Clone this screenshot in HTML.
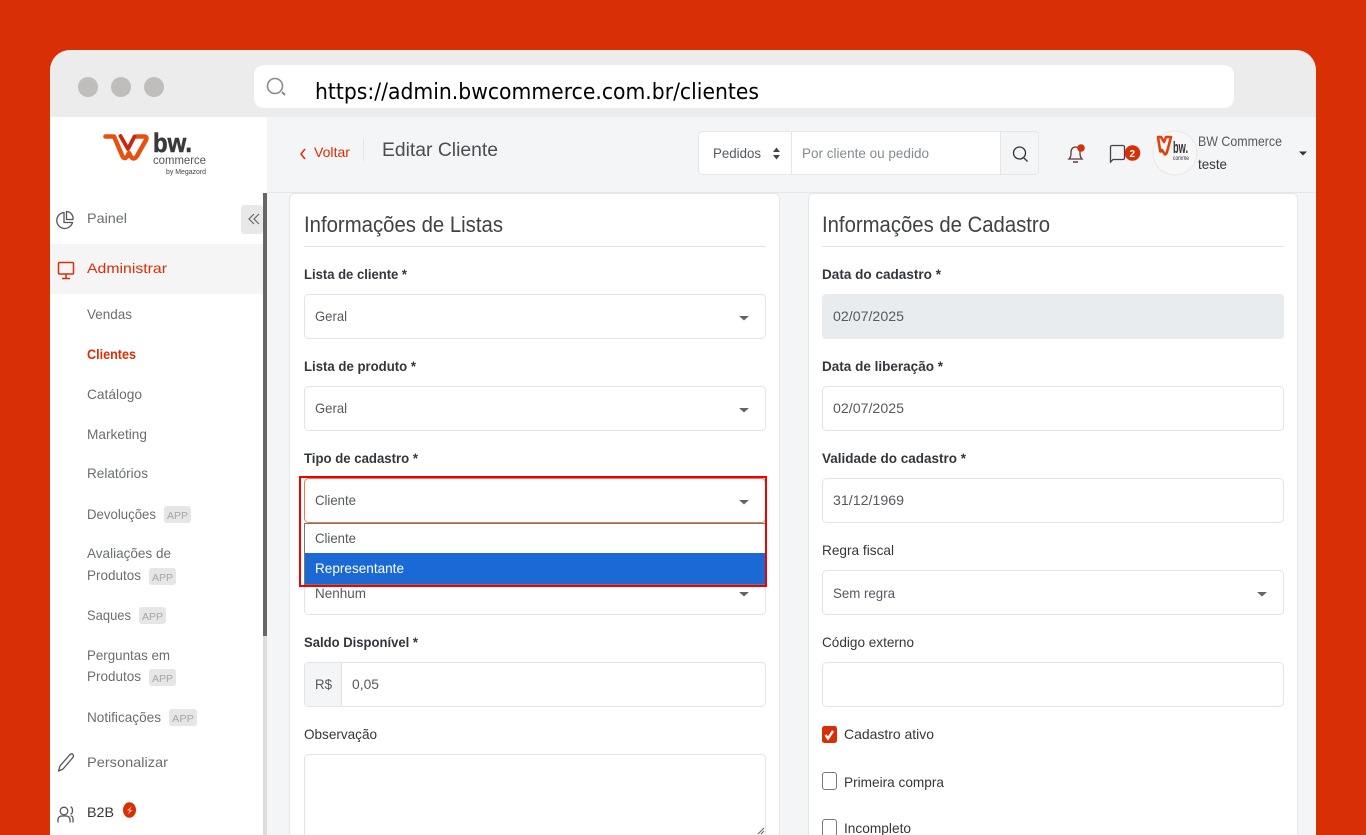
<!DOCTYPE html>
<html lang="pt-BR">
<head>
<meta charset="utf-8">
<title>Editar Cliente</title>
<style>
html,body{margin:0;padding:0;width:1366px;height:835px;overflow:hidden;background:#d82f05}
svg{display:block}
text{font-family:"Liberation Sans",sans-serif;font-size:14px;fill:#5c6167;white-space:pre}
.v{fill:#555a60}
.l{fill:#33373b;font-weight:bold}
.n{fill:#33373b}
.h{font-size:22px;fill:#3f4347}
.m{fill:#6a6e72}
.b{font-size:10px;fill:#a4a6a8}
.i{fill:none;stroke:#555;stroke-width:1.3;stroke-linecap:round;stroke-linejoin:round}
</style>
</head>
<body>
<svg width="1366" height="835" viewBox="0 0 1366 835" xmlns="http://www.w3.org/2000/svg">
<rect width="1366" height="835" fill="#d82f05"/>
<!-- browser window -->
<path d="M50 835V70a20 20 0 0 1 20-20H1296a20 20 0 0 1 20 20V835Z" fill="#ececec"/>
<circle cx="88" cy="87" r="10" fill="#bfbebc"/><circle cx="121" cy="87" r="10" fill="#bfbebc"/><circle cx="154" cy="87" r="10" fill="#bfbebc"/>
<rect x="254" y="65" width="980" height="43" rx="10" fill="#fff"/>
<circle cx="275" cy="86" r="7.500" fill="none" stroke="#8a8a8a" stroke-width="1.600"/><path d="M282 92l3 3" stroke="#8a8a8a" stroke-width="2"/>
<text x="315" y="99" textLength="444" lengthAdjust="spacingAndGlyphs" style="font-family:'DejaVu Sans',sans-serif;font-size:22px;fill:#000">https://admin.bwcommerce.com.br/clientes</text>
<!-- app -->
<rect x="50" y="117" width="1266" height="718" fill="#f4f5f7"/>
<rect x="50" y="117" width="217" height="718" fill="#fff"/>
<rect x="263" y="193" width="4" height="642" fill="#dcdcdc"/>
<rect x="263" y="193" width="4" height="443" fill="#666"/>
<!-- logo -->
<path d="M105.500 136.500H114L121.500 154Q124 161 127.500 156L129 153L130.500 156Q133.500 161 137 156L146 140Q147.500 136.500 144 136.500H136.500" fill="none" stroke="#e8500f" stroke-width="4.500" stroke-linejoin="round" stroke-linecap="round"/>
<path d="M120.500 136L128 149L134.500 136.500" fill="none" stroke="#c9280f" stroke-width="3.800" stroke-linecap="round" stroke-linejoin="round"/>
<text x="153" y="152" textLength="39" lengthAdjust="spacingAndGlyphs" style="font-size:27px;font-weight:bold;fill:#3a3a3a;stroke:#3a3a3a;stroke-width:.6">bw.</text>
<text x="153" y="164" textLength="53" lengthAdjust="spacingAndGlyphs" style="font-size:12px;fill:#555">commerce</text>
<text x="166" y="174" textLength="40" lengthAdjust="spacingAndGlyphs" style="font-size:7px;fill:#444">by Megazord</text>
<!-- sidebar -->
<rect x="241" y="205" width="22" height="29" rx="3" fill="#e8e8e8"/>
<path d="M254 214l-5 5 5 5M259 214l-5 5 5 5" fill="none" stroke="#666" stroke-width="1.200"/>
<g class="i"><path d="M64 212.500A8 8 0 1 0 72.500 222.500H64Z"/><path d="M66.500 211.500A7 7 0 0 1 73 219.500H66.500Z"/></g>
<text x="87" y="223" textLength="40" lengthAdjust="spacingAndGlyphs" class="m">Painel</text>
<rect x="50" y="244" width="213" height="50" fill="#f5f5f5"/>
<g fill="none" stroke="#d82f05" stroke-width="1.500"><rect x="58.500" y="262.500" width="15" height="11.500" rx="1"/><path d="M66 274v4M62 278.500h8"/></g>
<text x="87" y="273" textLength="80" lengthAdjust="spacingAndGlyphs" style="fill:#d82f05">Administrar</text>
<text x="87" y="319" textLength="45" lengthAdjust="spacingAndGlyphs" class="m">Vendas</text>
<text x="87" y="359" textLength="49" lengthAdjust="spacingAndGlyphs" style="fill:#d82f05;font-weight:bold">Clientes</text>
<text x="87" y="399" textLength="55" lengthAdjust="spacingAndGlyphs" class="m">Catálogo</text>
<text x="87" y="439" textLength="60" lengthAdjust="spacingAndGlyphs" class="m">Marketing</text>
<text x="87" y="478" textLength="61" lengthAdjust="spacingAndGlyphs" class="m">Relatórios</text>
<text x="87" y="519" textLength="69" lengthAdjust="spacingAndGlyphs" class="m">Devoluções</text>
<rect x="164" y="506" width="27" height="17" rx="3" fill="#e6e6e6"/><text x="167" y="519" textLength="21" lengthAdjust="spacingAndGlyphs" class="b">APP</text>
<text x="87" y="558" textLength="84" lengthAdjust="spacingAndGlyphs" class="m">Avaliações de</text>
<text x="87" y="580" textLength="54" lengthAdjust="spacingAndGlyphs" class="m">Produtos</text>
<rect x="149" y="568" width="27" height="17" rx="3" fill="#e6e6e6"/><text x="152" y="581" textLength="21" lengthAdjust="spacingAndGlyphs" class="b">APP</text>
<text x="87" y="620" textLength="44" lengthAdjust="spacingAndGlyphs" class="m">Saques</text>
<rect x="139" y="607" width="27" height="17" rx="3" fill="#e6e6e6"/><text x="142" y="620" textLength="21" lengthAdjust="spacingAndGlyphs" class="b">APP</text>
<text x="87" y="660" textLength="83" lengthAdjust="spacingAndGlyphs" class="m">Perguntas em</text>
<text x="87" y="681" textLength="54" lengthAdjust="spacingAndGlyphs" class="m">Produtos</text>
<rect x="149" y="669" width="27" height="17" rx="3" fill="#e6e6e6"/><text x="152" y="682" textLength="21" lengthAdjust="spacingAndGlyphs" class="b">APP</text>
<text x="87" y="722" textLength="74" lengthAdjust="spacingAndGlyphs" class="m">Notificações</text>
<rect x="169" y="709" width="28" height="17" rx="3" fill="#e6e6e6"/><text x="172" y="722" textLength="22" lengthAdjust="spacingAndGlyphs" class="b">APP</text>
<path class="i" d="M58.500 771l1.500-5 9.500-11c1.500-1.500 3-1.500 3.500-.5s.5 2.500-.5 3.500l-9.500 11z"/>
<text x="87" y="767" textLength="81" lengthAdjust="spacingAndGlyphs" class="m">Personalizar</text>
<g class="i"><circle cx="64" cy="811" r="3.800"/><path d="M58 822v-2c0-3 2-4 4-4h4c2 0 4 1 4 4v2M71 807c2 1 2 6 0 7M73 822v-3c0-2-1-3-2-3"/></g>
<text x="87" y="817" textLength="27" lengthAdjust="spacingAndGlyphs" class="n">B2B</text>
<ellipse cx="129.500" cy="810" rx="6.500" ry="7.800" fill="#d82f05"/><path d="M132 806l-5 4.500h3l-2.500 4 5-4.500h-3z" fill="#f6c9bb"/>
<!-- header -->
<path d="M305 149l-4 5 4 5" fill="none" stroke="#d82f05" stroke-width="1.500"/>
<text x="314" y="157" textLength="36" lengthAdjust="spacingAndGlyphs" style="fill:#d82f05">Voltar</text>
<rect x="363" y="139" width="1" height="22" fill="#e4e5e8"/>
<text x="382" y="156" textLength="116" lengthAdjust="spacingAndGlyphs" style="font-size:19px;fill:#4a4e52">Editar Cliente</text>
<rect x="698.500" y="131.500" width="340" height="43" rx="4" fill="#fff" stroke="#e4e6ea"/>
<path d="M1000 132h34a4 4 0 0 1 4 4v34a4 4 0 0 1-4 4h-34z" fill="#f4f5f7"/>
<path d="M791.500 131v44M1000.500 131v44" stroke="#e4e6ea"/>
<text x="713" y="158" textLength="48" lengthAdjust="spacingAndGlyphs" class="v">Pedidos</text>
<path d="M773 152l3.500-4.500 3.500 4.500zM773 155l3.500 4.500 3.500-4.500z" fill="#444"/>
<text x="802" y="158" textLength="127" lengthAdjust="spacingAndGlyphs" style="fill:#858b92">Por cliente ou pedido</text>
<circle cx="1019.500" cy="153" r="6" fill="none" stroke="#333" stroke-width="1.300"/><path d="M1024 158l3.500 3.500" stroke="#333" stroke-width="1.300"/>
<path d="M1069 159c2-2 2-4 2-7 0-3 2-5 4.500-5s4.500 2 4.500 5c0 3 0 5 2 7z" fill="none" stroke="#5a3a34" stroke-width="1.300"/><path d="M1073 162h5" stroke="#5a3a34" stroke-width="1.500"/>
<circle cx="1081" cy="148" r="3.800" fill="#d82f05"/>
<path d="M1110.500 147a1.500 1.500 0 0 1 1.500-1.500h11a1.500 1.500 0 0 1 1.500 1.500v11a1.500 1.500 0 0 1-1.500 1.500h-10l-2.500 2.500z" fill="none" stroke="#444" stroke-width="1.300"/>
<circle cx="1132.500" cy="153" r="7.800" fill="#d82f05"/>
<text x="1129.500" y="157" style="font-size:10px;font-weight:bold;fill:#fff">2</text>
<circle cx="1175" cy="153" r="22" fill="#f7f7f7" stroke="#e8e8e8"/>
<path d="M1158 137h3l3 5 2-5h5l-4 15c-1 3-2 3-3 1l-2-3c-1 2-2 2-2 0z" fill="none" stroke="#e0420f" stroke-width="2.600" stroke-linejoin="round"/>
<text x="1173" y="153" textLength="15" lengthAdjust="spacingAndGlyphs" style="font-size:17px;font-weight:bold;fill:#333">bw.</text>
<text x="1173" y="160" textLength="16" lengthAdjust="spacingAndGlyphs" style="font-size:6px;fill:#333">comme</text>
<text x="1198" y="146" textLength="84" lengthAdjust="spacingAndGlyphs" class="v">BW Commerce</text>
<text x="1198" y="169" textLength="29" lengthAdjust="spacingAndGlyphs" class="n">teste</text>
<path d="M1299 151.500h8l-4 4z" fill="#333"/>
<!-- cards -->
<rect x="289.500" y="193.500" width="490" height="660" rx="5" fill="#fff" stroke="#e6e7ea"/>
<rect x="808.500" y="193.500" width="489" height="660" rx="5" fill="#fff" stroke="#e6e7ea"/>
<rect x="267" y="192" width="1049" height="1" fill="#e6e7ea"/>
<!-- left card -->
<text x="304" y="232" textLength="199" lengthAdjust="spacingAndGlyphs" class="h">Informações de Listas</text>
<rect x="304" y="246" width="462" height="1" fill="#e4e5e7"/>
<text x="304" y="279" textLength="103" lengthAdjust="spacingAndGlyphs" class="l">Lista de cliente *</text>
<rect x="304.500" y="294.500" width="461" height="44" rx="4" fill="#fff" stroke="#e2e4e7"/>
<text x="315" y="321" textLength="32" lengthAdjust="spacingAndGlyphs" class="v">Geral</text>
<path d="M739 316h10l-5 4.500z" fill="#666"/>
<text x="304" y="371" textLength="112" lengthAdjust="spacingAndGlyphs" class="l">Lista de produto *</text>
<rect x="304.500" y="386.500" width="461" height="44" rx="4" fill="#fff" stroke="#e2e4e7"/>
<text x="315" y="413" textLength="32" lengthAdjust="spacingAndGlyphs" class="v">Geral</text>
<path d="M739 408h10l-5 4.500z" fill="#666"/>
<text x="304" y="463" textLength="114" lengthAdjust="spacingAndGlyphs" class="l">Tipo de cadastro *</text>
<rect x="304.500" y="478.500" width="461" height="44" rx="4" fill="#fff" stroke="#ee7a4e"/>
<text x="315" y="505" textLength="41" lengthAdjust="spacingAndGlyphs" class="v">Cliente</text>
<path d="M739 500h10l-5 4.500z" fill="#666"/>
<rect x="304.500" y="570.500" width="461" height="44" rx="4" fill="#fff" stroke="#e2e4e7"/>
<text x="315" y="598" textLength="51" lengthAdjust="spacingAndGlyphs" class="v">Nenhum</text>
<path d="M739 592h10l-5 4.500z" fill="#666"/>
<rect x="304" y="523" width="462" height="62" fill="#fff"/>
<rect x="304.500" y="523.500" width="461" height="61" fill="none" stroke="#777"/>
<rect x="305" y="553" width="460" height="31" fill="#1a69d4"/>
<text x="315" y="543" textLength="41" lengthAdjust="spacingAndGlyphs" class="v">Cliente</text>
<text x="315" y="573" textLength="89" lengthAdjust="spacingAndGlyphs" style="fill:#fff">Representante</text>
<rect x="300" y="477" width="466" height="109" fill="none" stroke="#f00000" stroke-width="2"/>
<text x="304" y="647" textLength="114" lengthAdjust="spacingAndGlyphs" class="l">Saldo Disponível *</text>
<rect x="304.500" y="662.500" width="461" height="44" rx="4" fill="#fff" stroke="#e2e4e7"/>
<path d="M305 667a4 4 0 0 1 4-4h32v43h-32a4 4 0 0 1-4-4z" fill="#f4f5f7"/>
<rect x="341" y="663" width="1" height="43" fill="#e2e4e7"/>
<text x="315" y="689" textLength="17" lengthAdjust="spacingAndGlyphs" class="v">R$</text>
<text x="352" y="689" textLength="27" lengthAdjust="spacingAndGlyphs" class="v">0,05</text>
<text x="304" y="739" textLength="73" lengthAdjust="spacingAndGlyphs" class="n">Observação</text>
<rect x="304.500" y="754.500" width="461" height="100" rx="4" fill="#fff" stroke="#e2e4e7"/>
<path d="M758 834l6-6M761 834l3-3" stroke="#666" stroke-width="1"/>
<!-- right card -->
<text x="822" y="232" textLength="228" lengthAdjust="spacingAndGlyphs" class="h">Informações de Cadastro</text>
<rect x="822" y="246" width="462" height="1" fill="#e4e5e7"/>
<text x="822" y="279" textLength="119" lengthAdjust="spacingAndGlyphs" class="l">Data do cadastro *</text>
<rect x="822" y="294" width="462" height="45" rx="4" fill="#e9ecef"/>
<text x="833" y="321" textLength="71" lengthAdjust="spacingAndGlyphs" class="v">02/07/2025</text>
<text x="822" y="371" textLength="121" lengthAdjust="spacingAndGlyphs" class="l">Data de liberação *</text>
<rect x="822.500" y="386.500" width="461" height="44" rx="4" fill="#fff" stroke="#e2e4e7"/>
<text x="833" y="413" textLength="71" lengthAdjust="spacingAndGlyphs" class="v">02/07/2025</text>
<text x="822" y="463" textLength="144" lengthAdjust="spacingAndGlyphs" class="l">Validade do cadastro *</text>
<rect x="822.500" y="478.500" width="461" height="44" rx="4" fill="#fff" stroke="#e2e4e7"/>
<text x="833" y="505" textLength="71" lengthAdjust="spacingAndGlyphs" class="v">31/12/1969</text>
<text x="822" y="555" textLength="72" lengthAdjust="spacingAndGlyphs" class="n">Regra fiscal</text>
<rect x="822.500" y="570.500" width="461" height="44" rx="4" fill="#fff" stroke="#e2e4e7"/>
<text x="833" y="598" textLength="62" lengthAdjust="spacingAndGlyphs" class="v">Sem regra</text>
<path d="M1257 592h10l-5 4.500z" fill="#666"/>
<text x="822" y="647" textLength="92" lengthAdjust="spacingAndGlyphs" class="n">Código externo</text>
<rect x="822.500" y="662.500" width="461" height="44" rx="4" fill="#fff" stroke="#e2e4e7"/>
<rect x="822" y="726" width="15" height="17" rx="2.500" fill="#d82f05"/>
<path d="M825.500 735l2.500 3.500 5-7.500" fill="none" stroke="#fff" stroke-width="2.400"/>
<text x="844" y="739" textLength="90" lengthAdjust="spacingAndGlyphs" class="n">Cadastro ativo</text>
<rect x="822.500" y="772.500" width="14" height="17" rx="2.500" fill="#fff" stroke="#777"/>
<text x="844" y="787" textLength="100" lengthAdjust="spacingAndGlyphs" class="n">Primeira compra</text>
<rect x="822.500" y="819.500" width="14" height="17" rx="2.500" fill="#fff" stroke="#777"/>
<text x="844" y="833" textLength="67" lengthAdjust="spacingAndGlyphs" class="n">Incompleto</text>
</svg>
</body>
</html>
